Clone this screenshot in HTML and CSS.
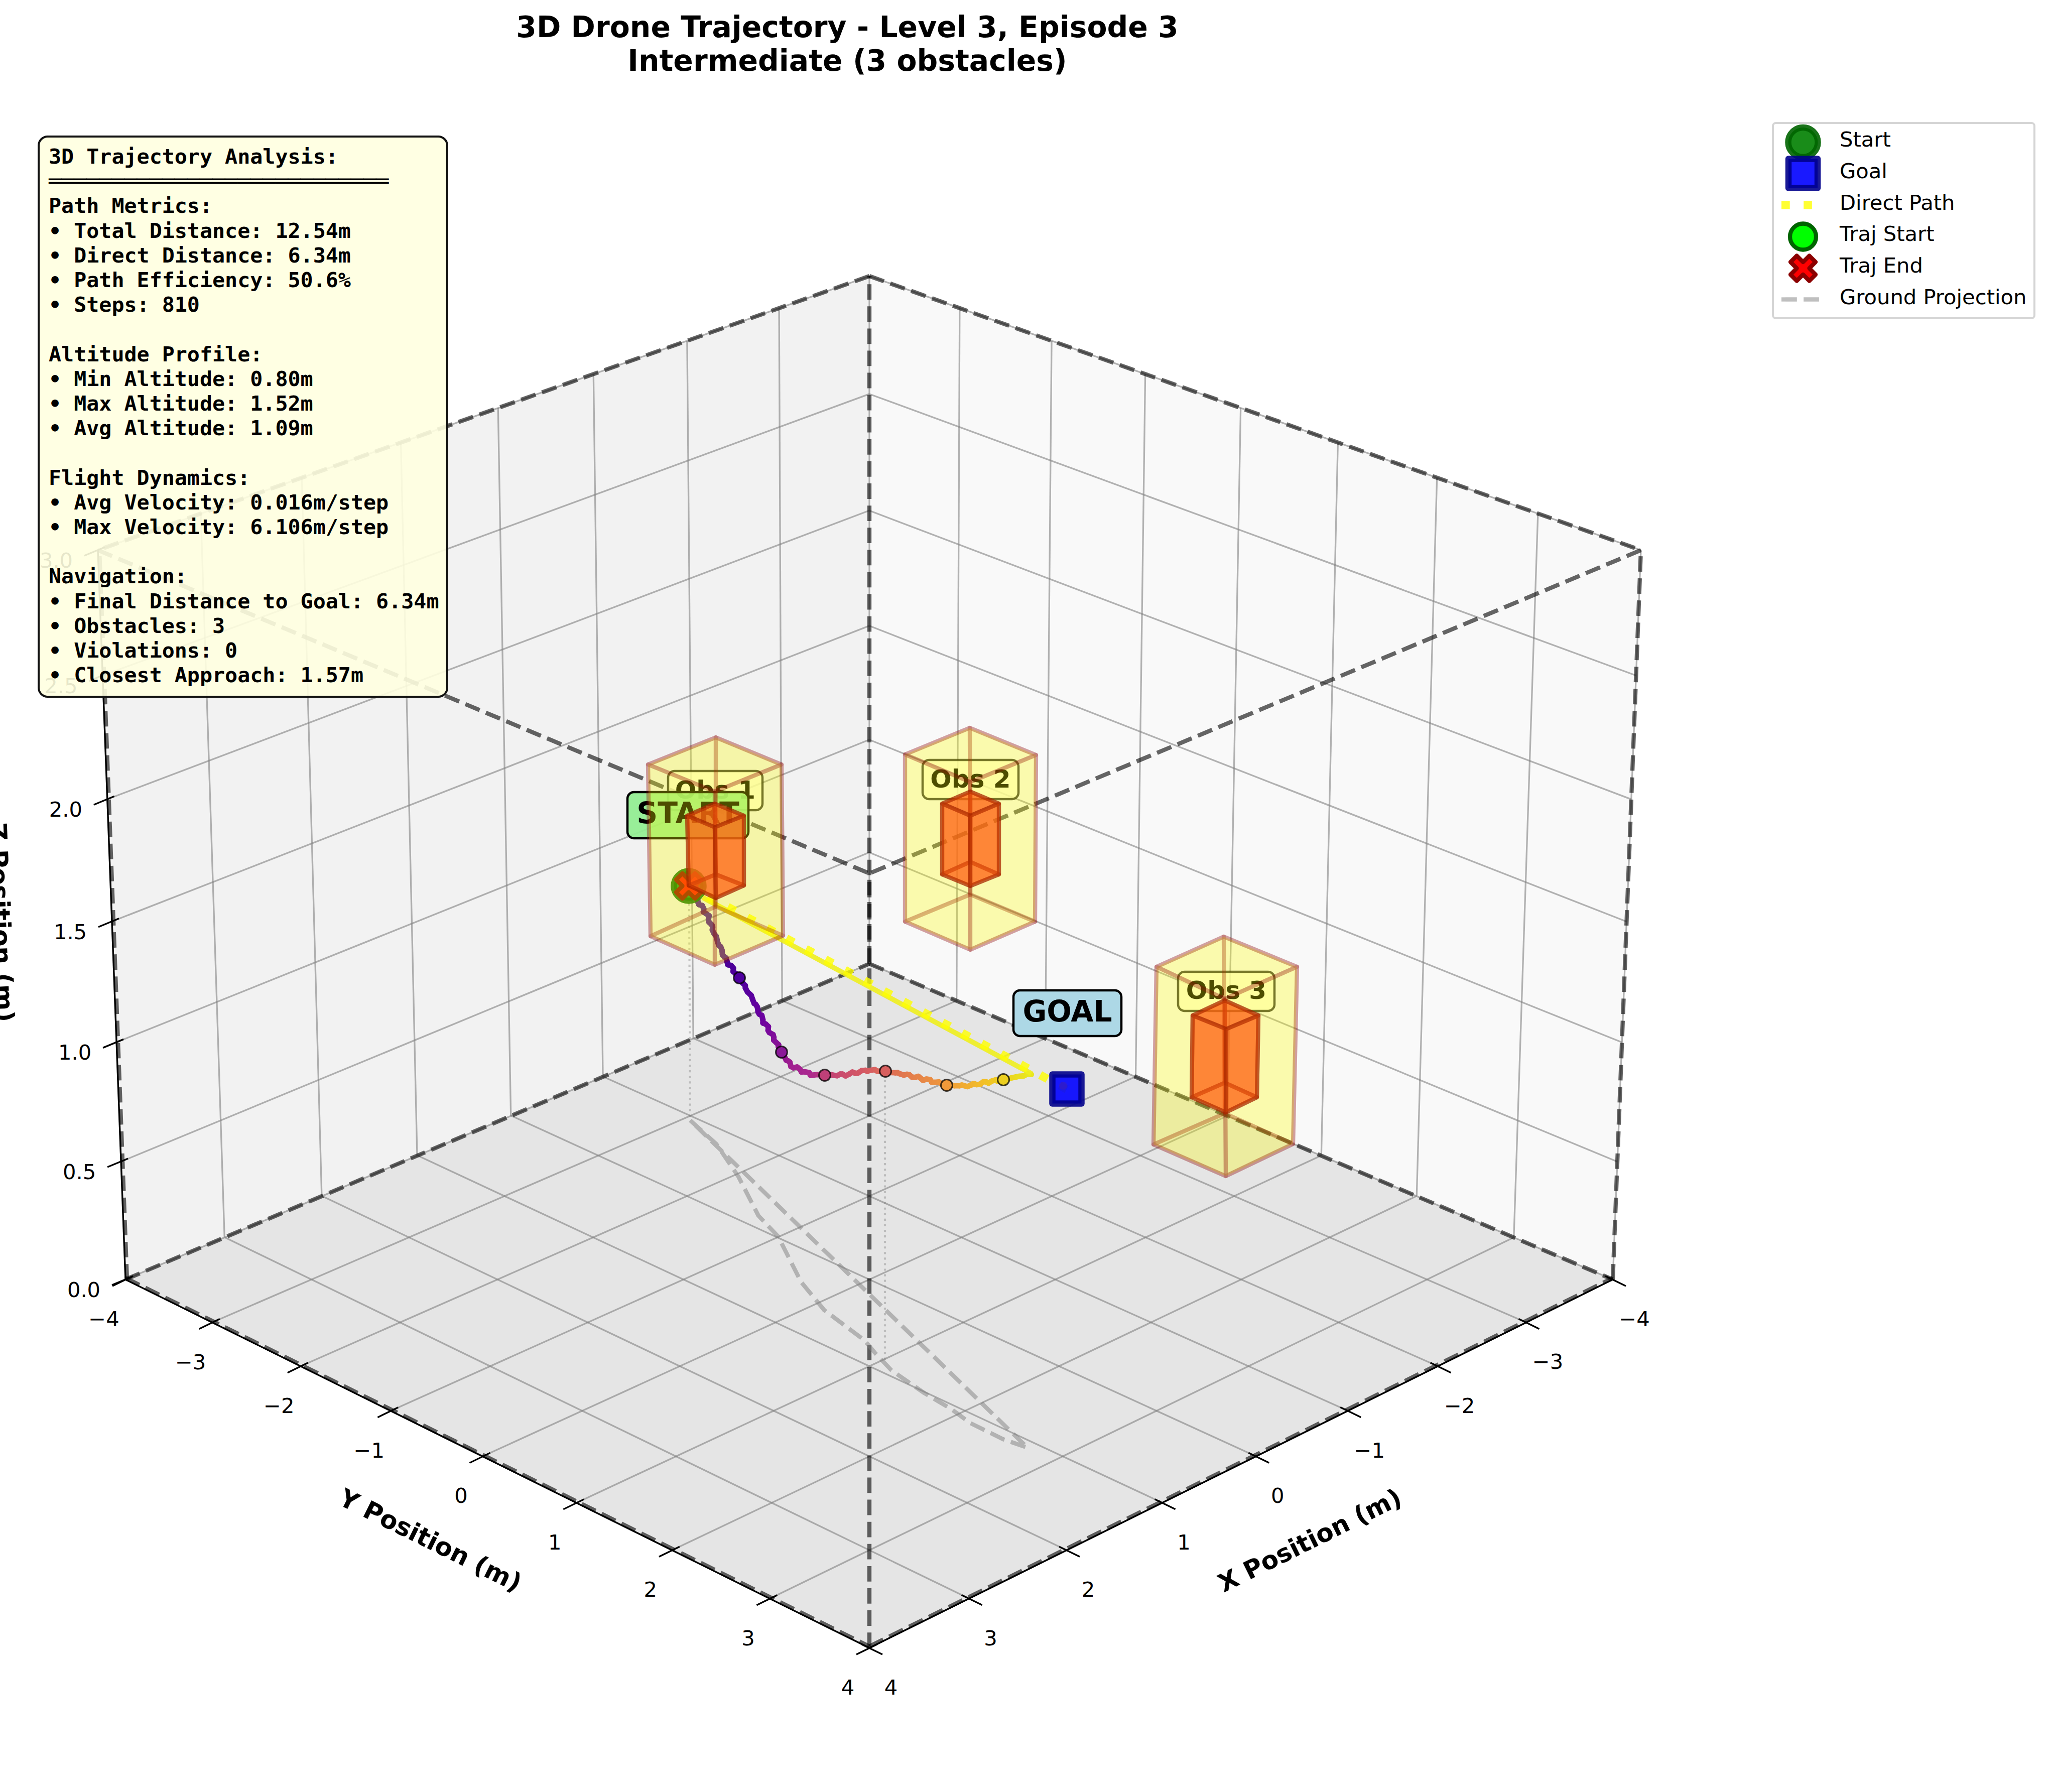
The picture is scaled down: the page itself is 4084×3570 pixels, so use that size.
FILE: index.html
```html
<!DOCTYPE html>
<html lang="en">
<head>
<meta charset="UTF-8" />
<title>3D Drone Trajectory - Level 3, Episode 3</title>
<link rel="stylesheet" href="styles.css">
</head>
<body>

<div class="figure">
  <!-- 3D axes, filled in by chart.js -->
  <svg id="plot" class="plot" width="4084" height="3570" viewBox="0 0 4084 3570"></svg>

  <h1 class="plot-title">3D Drone Trajectory - Level 3, Episode 3<br>Intermediate (3 obstacles)</h1>

  <!-- Analysis box -->
  <pre class="stats-box">3D Trajectory Analysis:
═══════════════════════════
Path Metrics:
• Total Distance: 12.54m
• Direct Distance: 6.34m
• Path Efficiency: 50.6%
• Steps: 810

Altitude Profile:
• Min Altitude: 0.80m
• Max Altitude: 1.52m
• Avg Altitude: 1.09m

Flight Dynamics:
• Avg Velocity: 0.016m/step
• Max Velocity: 6.106m/step

Navigation:
• Final Distance to Goal: 6.34m
• Obstacles: 3
• Violations: 0
• Closest Approach: 1.57m</pre>

  <!-- Legend -->
  <div class="legend">
    <div class="legend-row">
      <svg class="legend-icon" viewBox="0 0 100 63"><circle class="mark-start" cx="50" cy="31.5" r="29.5"/></svg>
      <span class="legend-label">Start</span>
    </div>
    <div class="legend-row">
      <svg class="legend-icon" viewBox="0 0 100 63"><rect class="mark-goal" x="21" y="2.5" width="58" height="58"/></svg>
      <span class="legend-label">Goal</span>
    </div>
    <div class="legend-row">
      <svg class="legend-icon" viewBox="0 0 100 63"><line class="line-direct" x1="7" y1="31.5" x2="90" y2="31.5"/></svg>
      <span class="legend-label">Direct Path</span>
    </div>
    <div class="legend-row">
      <svg class="legend-icon" viewBox="0 0 100 63"><circle class="mark-traj-start" cx="50" cy="31.5" r="26"/></svg>
      <span class="legend-label">Traj Start</span>
    </div>
    <div class="legend-row">
      <svg class="legend-icon" viewBox="0 0 100 63"><polygon class="mark-traj-end" points="37.5,6.5 50,19 62.5,6.5 75,19 62.5,31.5 75,44 62.5,56.5 50,44 37.5,56.5 25,44 37.5,31.5 25,19"/></svg>
      <span class="legend-label">Traj End</span>
    </div>
    <div class="legend-row">
      <svg class="legend-icon" viewBox="0 0 100 63"><line class="line-ground" x1="7" y1="31.5" x2="83" y2="31.5"/></svg>
      <span class="legend-label">Ground Projection</span>
    </div>
  </div>
</div>

<script src="chart.js"></script>
</body>
</html>
```

FILE: styles.css
```css
/* Reset & base */
* {
  box-sizing: border-box;
}
html, body {
  margin: 0;
  background: #fff;
}

.figure {
  position: relative;
  width: 4084px;
  height: 3570px;
  overflow: hidden;
  font-family: "DejaVu Sans", sans-serif;
  color: #000;
}

.plot {
  position: absolute;
  left: 0;
  top: 0;
}

/* Title */
.plot-title {
  position: relative;
  width: 3376px;
  margin: 0;
  padding-top: 21px;
  text-align: center;
  font-size: 58.33px;
  line-height: 67px;
  font-weight: 700;
}

/* Analysis box */
.stats-box {
  position: absolute;
  left: 75px;
  top: 270px;
  width: 818px;
  height: 1120px;
  margin: 0;
  padding: 13px 0 0 18px;
  border: 4px solid #111;
  border-radius: 20px;
  background: rgba(255, 255, 224, 0.9);
  font-family: "DejaVu Sans Mono", monospace;
  font-size: 41.67px;
  line-height: 49.2px;
  font-weight: 700;
}

/* Legend */
.legend {
  position: absolute;
  left: 3530px;
  top: 243px;
  width: 525px;
  height: 393px;
  padding: 4.6px 0 0 8px;
  border: 4px solid #d5d5d5;
  border-radius: 8px;
  background: #fff;
}
.legend-row {
  display: flex;
  align-items: center;
  gap: 23px;
  height: 62.8px;
}
.legend-icon {
  width: 100px;
  height: 63px;
  flex: none;
  overflow: visible;
}
.legend-label {
  padding-bottom: 10px;
  font-size: 41.67px;
  line-height: 50px;
  white-space: nowrap;
}

/* Markers, shared by the legend and the plot */
.mark-start {
  fill: rgba(0, 128, 0, 0.9);
  stroke: rgba(0, 100, 0, 0.9);
  stroke-width: 12.5;
}
.mark-goal {
  fill: rgba(0, 0, 255, 0.9);
  stroke: rgba(0, 0, 139, 0.9);
  stroke-width: 12.5;
  stroke-linejoin: round;
}
.mark-traj-start {
  fill: #00ff00;
  stroke: #006400;
  stroke-width: 8.3;
}
.mark-traj-end {
  fill: #ff0000;
  stroke: #8b0000;
  stroke-width: 8.3;
  stroke-linejoin: round;
}
.line-direct {
  stroke: rgba(255, 255, 0, 0.8);
  stroke-width: 16.67;
  stroke-dasharray: 16.67 27.5;
  fill: none;
}
.line-ground {
  stroke: rgba(128, 128, 128, 0.5);
  stroke-width: 8.33;
  stroke-dasharray: 30.8 13.3;
  stroke-linejoin: round;
  fill: none;
}

/* Axes */
.pane-left { fill: #f2f2f2; }
.pane-right { fill: #f9f9f9; }
.pane-floor { fill: #e5e5e5; }

.grid-line {
  stroke: rgba(128, 128, 128, 0.6);
  stroke-width: 3.3;
}
.box-edge {
  stroke: rgba(0, 0, 0, 0.6);
  stroke-width: 8.33;
  stroke-dasharray: 30.8 13.3;
}
.axis-line,
.tick-mark {
  stroke: #000;
  stroke-width: 3.3;
}
.tick-label {
  font-size: 41.67px;
  text-anchor: middle;
}
.axis-label {
  font-size: 50px;
  font-weight: 700;
  text-anchor: middle;
}

/* Flight path */
.traj-seg {
  stroke-width: 11;
  stroke-linecap: round;
  fill: none;
}
.traj-jump {
  stroke: rgba(238, 238, 30, 0.9);
  stroke-width: 10;
}
.traj-dot {
  stroke: rgba(0, 0, 0, 0.75);
  stroke-width: 3;
}
.drop-line {
  stroke: rgba(128, 128, 128, 0.4);
  stroke-width: 4.17;
  stroke-dasharray: 4.17 6.9;
}
.goal-spot {
  fill: rgba(70, 30, 170, 0.45);
}

/* Text tags */
.tag-box {
  stroke-width: 4.5;
}
.tag-obs {
  fill: rgba(255, 255, 224, 0.8);
  stroke: rgba(0, 0, 0, 0.75);
}
.tag-start {
  fill: rgba(144, 238, 144, 0.92);
  stroke: #000;
}
.tag-goal {
  fill: #add8e6;
  stroke: #000;
}
.tag-text {
  font-weight: 700;
  text-anchor: middle;
}
.tag-text-obs { font-size: 50px; }
.tag-text-big { font-size: 58.33px; }

/* Obstacles */
.obs-outer {
  fill: rgba(255, 255, 0, 0.165);
  stroke: rgba(139, 0, 0, 0.2);
  stroke-width: 8.33;
  stroke-linejoin: round;
}
.obs-inner {
  fill: rgba(255, 96, 16, 0.5);
  stroke: rgba(170, 40, 0, 0.5);
  stroke-width: 8.33;
  stroke-linejoin: round;
}
```

FILE: chart.js
```js
(() => {
  const svg = document.getElementById('plot');
  const NS = 'http://www.w3.org/2000/svg';

  function add(tag, attrs, text) {
    const node = document.createElementNS(NS, tag);
    Object.keys(attrs).forEach(k => node.setAttribute(k, attrs[k]));
    if (text !== undefined) node.textContent = text;
    svg.appendChild(node);
    return node;
  }
  const line = (a, b, cls) => add('line', { x1: a[0], y1: a[1], x2: b[0], y2: b[1], class: cls });
  const pts = list => list.map(p => p.join(',')).join(' ');
  const shift = (p, dx, dy) => [p[0] + dx, p[1] + dy];

  // Corners of the axes cube, in picture pixels
  const B = [1732, 1920], L = [250, 2549], R = [3213, 2549], F = [1732, 3283];
  const TB = [1732, 550], TL = [195, 1096], TR = [3269, 1096], TF = [1732, 1740];

  // Projective map of the unit square onto a quad (p0 at 0,0 - p1 at 1,0 - p2 at 1,1 - p3 at 0,1)
  function quadMap(p0, p1, p2, p3) {
    const dx1 = p1[0] - p2[0], dx2 = p3[0] - p2[0], dx3 = p0[0] - p1[0] + p2[0] - p3[0];
    const dy1 = p1[1] - p2[1], dy2 = p3[1] - p2[1], dy3 = p0[1] - p1[1] + p2[1] - p3[1];
    const den = dx1 * dy2 - dx2 * dy1;
    const g = (dx3 * dy2 - dx2 * dy3) / den, h = (dx1 * dy3 - dx3 * dy1) / den;
    const a = p1[0] - p0[0] + g * p1[0], b = p3[0] - p0[0] + h * p3[0];
    const d = p1[1] - p0[1] + g * p1[1], e = p3[1] - p0[1] + h * p3[1];
    return (u, v) => {
      const w = g * u + h * v + 1;
      return [(a * u + b * v + p0[0]) / w, (d * u + e * v + p0[1]) / w];
    };
  }

  const floor = quadMap(B, L, F, R);       // u = x, v = y
  const wallLeft = quadMap(B, L, TL, TB);  // u = x, v = z
  const wallRight = quadMap(B, R, TR, TB); // u = y, v = z
  const unit = t => (t + 4) / 8;

  // Panes
  add('polygon', { points: pts([B, L, TL, TB]), class: 'pane-left' });
  add('polygon', { points: pts([B, R, TR, TB]), class: 'pane-right' });
  add('polygon', { points: pts([B, L, F, R]), class: 'pane-floor' });

  // Grid
  for (let t = -3; t <= 3; t++) {
    const u = unit(t);
    line(floor(u, 0), floor(u, 1), 'grid-line');
    line(floor(0, u), floor(1, u), 'grid-line');
    line(wallLeft(u, 0), wallLeft(u, 1), 'grid-line');
    line(wallRight(u, 0), wallRight(u, 1), 'grid-line');
  }
  for (let z = 0.5; z < 3; z += 0.5) {
    line(wallLeft(0, z / 3), wallLeft(1, z / 3), 'grid-line');
    line(wallRight(0, z / 3), wallRight(1, z / 3), 'grid-line');
  }
  [[TB, TL], [TB, TR], [B, TB], [L, TL], [R, TR], [L, B], [B, R], [L, F], [F, R]].forEach(e => {
    line(e[0], e[1], 'grid-line');
  });

  // Dashed cube outline
  [[TB, TL], [TB, TR], [TL, TF], [TR, TF], [B, TB], [F, TF], [R, TR], [L, B], [B, R]].forEach(e => {
    line(e[0], e[1], 'box-edge');
  });
  line(shift(L, 3, 0), shift(TL, 3, 0), 'box-edge');
  line(shift(L, 0, -3), shift(F, 0, -3), 'box-edge');
  line(shift(F, 0, -3), shift(R, 0, -3), 'box-edge');

  // Axis lines, ticks and tick labels
  line(L, F, 'axis-line');
  line(F, R, 'axis-line');
  line(L, TL, 'axis-line');

  const fmt = t => (t < 0 ? '\u2212' + (-t) : String(t));
  for (let t = -4; t <= 4; t++) {
    const u = unit(t);
    const onLeft = floor(1, u);
    line(shift(onLeft, -26, 13), shift(onLeft, 15, -7), 'tick-mark');
    add('text', { x: onLeft[0] - 43, y: onLeft[1] + 93, class: 'tick-label' }, fmt(t));

    const onRight = floor(u, 1);
    line(shift(onRight, 26, 13), shift(onRight, -15, -7), 'tick-mark');
    add('text', { x: onRight[0] + 43, y: onRight[1] + 93, class: 'tick-label' }, fmt(t));
  }
  for (let z = 0; z <= 3; z += 0.5) {
    const p = wallLeft(1, z / 3);
    line(shift(p, -27, 11), shift(p, 14, -6), 'tick-mark');
    add('text', { x: p[0] - 83, y: p[1] + 35, class: 'tick-label' }, z.toFixed(1));
  }

  // Axis titles
  add('text', { class: 'axis-label', transform: 'translate(850 3084) rotate(26.3)' }, 'Y Position (m)');
  add('text', { class: 'axis-label', transform: 'translate(2617 3084) rotate(-26.4)' }, 'X Position (m)');
  add('text', { class: 'axis-label', transform: 'translate(-15 1838) rotate(87.8)' }, 'Z Position (m)');

  // Drop lines and ground projection
  line([1373, 1800], [1375, 2232], 'drop-line');
  line([1763, 2140], [1763, 2710], 'drop-line');
  const ground = [
    [1375, 2232], [1427, 2279], [1471, 2344], [1511, 2422], [1550, 2463], [1596, 2554], [1642, 2610],
    [1722, 2670], [1743, 2695], [1776, 2730], [1841, 2775], [1895, 2807], [1933, 2835], [1998, 2867],
    [2047, 2884], [1375, 2232]
  ];
  add('polyline', { points: pts(ground), class: 'line-ground' });

  // Trajectory: waypoints with colour, wobbled a little like the noisy flight data
  const way = [
    [1372, 1765, '#4a0a96'], [1391, 1796, '#4a0a96'], [1410, 1825, '#4b0a96'], [1423, 1859, '#4b0596'],
    [1445, 1911, '#4b0096'], [1473, 1948, '#4f009c'], [1500, 1991, '#5c009e'], [1519, 2031, '#6c009f'],
    [1544, 2072, '#84109a'], [1557, 2096, '#8a1090'], [1576, 2123, '#a02090'], [1615, 2141, '#ab2890'],
    [1643, 2142, '#bf3f78'], [1685, 2141, '#cc4e6c'], [1729, 2132, '#d65c62'], [1764, 2134, '#dc6a58'],
    [1806, 2141, '#e27a4e'], [1857, 2154, '#ea8e42'], [1886, 2162, '#f09a3a'], [1927, 2163, '#f0ae30'],
    [1959, 2157, '#f2be28'], [1999, 2151, '#ecd020'], [2055, 2139, '#e8e820']
  ];
  const hex = c => [1, 3, 5].map(i => parseInt(c.substr(i, 2), 16));
  let step = 0;
  for (let i = 0; i < way.length - 1; i++) {
    const a = way[i], b = way[i + 1];
    const ca = hex(a[2]), cb = hex(b[2]);
    const n = Math.max(2, Math.round(Math.hypot(b[0] - a[0], b[1] - a[1]) / 6));
    for (let k = 0; k < n; k++) {
      const t0 = k / n, t1 = (k + 1) / n;
      const wob = s => 1.6 * Math.sin(s * 1.7) + 1.1 * Math.sin(s * 4.3);
      const x0 = a[0] + (b[0] - a[0]) * t0 + wob(step), y0 = a[1] + (b[1] - a[1]) * t0 + wob(step + 9);
      const x1 = a[0] + (b[0] - a[0]) * t1 + wob(step + 1), y1 = a[1] + (b[1] - a[1]) * t1 + wob(step + 10);
      const col = ca.map((v, j) => Math.round(v + (cb[j] - v) * t0));
      add('line', { x1: x0, y1: y0, x2: x1, y2: y1, class: 'traj-seg', stroke: `rgb(${col.join(',')})` });
      step++;
    }
  }
  line([2055, 2139], [1400, 1788], 'traj-jump');

  [[1473, 1948, '#5000a0'], [1557, 2096, '#8a1a98'], [1643, 2142, '#bf4078'],
   [1764, 2134, '#d8605f'], [1886, 2162, '#f09a3a'], [1999, 2151, '#eccf20']].forEach(d => {
    add('circle', { cx: d[0], cy: d[1], r: 11.5, fill: d[2], class: 'traj-dot' });
  });

  // Direct path and markers
  line([1372, 1765], [2125, 2170], 'line-direct');
  add('circle', { cx: 1372, cy: 1765, r: 29.5, class: 'mark-start' });
  add('rect', { x: 2096.5, y: 2140.5, width: 58, height: 58, class: 'mark-goal' });
  add('circle', { cx: 2118, cy: 2163, r: 8, class: 'goal-spot' });
  const xMark = [[-12.5, -25], [0, -12.5], [12.5, -25], [25, -12.5], [12.5, 0], [25, 12.5],
                 [12.5, 25], [0, 12.5], [-12.5, 25], [-25, 12.5], [-12.5, 0], [-25, -12.5]];
  add('polygon', { points: pts(xMark.map(p => shift(p, 1372, 1765))), class: 'mark-traj-end' });

  // Text tags: [left, top, width, height, text, baseline, box class, text class]
  const tags = [
    [1331, 1536, 188, 78, 'Obs 1', 1591, 'tag-obs', 'tag-text-obs'],
    [1838, 1514, 191, 78, 'Obs 2', 1569, 'tag-obs', 'tag-text-obs'],
    [2347, 1936, 192, 78, 'Obs 3', 1990, 'tag-obs', 'tag-text-obs'],
    [1250, 1578, 241, 92, 'START', 1640, 'tag-start', 'tag-text-big'],
    [2019, 1973, 215, 91, 'GOAL', 2035, 'tag-goal', 'tag-text-big']
  ];
  tags.forEach(t => {
    add('rect', { x: t[0], y: t[1], width: t[2], height: t[3], rx: 13, class: `tag-box ${t[6]}` });
    add('text', { x: t[0] + t[2] / 2, y: t[5], class: `tag-text ${t[7]}` }, t[4]);
  });

  // Obstacles go on top of everything else
  function drawBox(v, cls) {
    const faces = [
      [v.a, v.l, v.bl, v.bb], [v.a, v.r, v.br, v.bb], [v.bb, v.bl, v.bf, v.br],
      [v.a, v.r, v.f, v.l], [v.l, v.f, v.bf, v.bl], [v.f, v.r, v.br, v.bf]
    ];
    faces.forEach(face => add('polygon', { points: pts(face), class: cls }));
  }

  const obstacles = [
    {
      outer: { a: [1426, 1469], l: [1291, 1523], r: [1557, 1523], f: [1424, 1577], bb: [1426, 1806], bl: [1296, 1865], br: [1560, 1864], bf: [1424, 1922] },
      inner: { a: [1424, 1601], l: [1369, 1625], r: [1482, 1625], f: [1424, 1648], bb: [1426, 1742], bl: [1372, 1764], br: [1482, 1764], bf: [1426, 1789] }
    },
    {
      outer: { a: [1932, 1450], l: [1803, 1503], r: [2064, 1504], f: [1933, 1558], bb: [1933, 1782], bl: [1803, 1836], br: [2062, 1836], bf: [1933, 1892] },
      inner: { a: [1933, 1577], l: [1877, 1601], r: [1990, 1601], f: [1933, 1625], bb: [1933, 1717], bl: [1877, 1742], br: [1990, 1742], bf: [1933, 1765] }
    },
    {
      outer: { a: [2438, 1866], l: [2304, 1926], r: [2584, 1926], f: [2440, 1990], bb: [2440, 2218], bl: [2298, 2280], br: [2576, 2279], bf: [2442, 2343] },
      inner: { a: [2440, 1993], l: [2376, 2023], r: [2507, 2023], f: [2443, 2050], bb: [2440, 2157], bl: [2374, 2186], br: [2504, 2186], bf: [2442, 2216] }
    }
  ];
  obstacles.forEach(o => {
    drawBox(o.outer, 'obs-outer');
    drawBox(o.inner, 'obs-inner');
  });
})();
```
